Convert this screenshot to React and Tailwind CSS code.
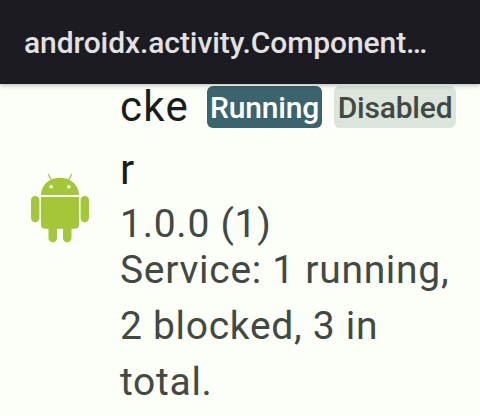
function AndroidIcon() {
  return (
    <svg viewBox="0 0 60 70" className="block h-[70px] w-[60px]" fill="#a4c639">
      <path d="M18.3 1.5 L22 8 M41.7 1.5 L38 8" stroke="#a4c639" strokeWidth="1.3" strokeLinecap="round" />
      <path d="M11 21.9 C11.3 12 19.5 4.8 30 4.8 S48.7 12 49 21.9 Z" />
      <circle cx="21.2" cy="13.7" r="1.8" fill="#fcfef8" />
      <circle cx="38.8" cy="13.7" r="1.8" fill="#fcfef8" />
      <path d="M11 24 H49 V51.5 Q49 55.8 44.7 55.8 H15.3 Q11 55.8 11 51.5 Z" />
      <rect x="1" y="23" width="8.4" height="26.3" rx="4.2" />
      <rect x="50.6" y="23" width="8.4" height="26.3" rx="4.2" />
      <path d="M18.5 52 H27 V65 a4.25 4.25 0 0 1 -8.5 0 Z M33 52 H41.5 V65 a4.25 4.25 0 0 1 -8.5 0 Z" />
    </svg>
  );
}

export default function App() {
  return (
    <div className="flex h-[416px] w-[480px] flex-col overflow-hidden bg-[#fcfef8] font-['Roboto',sans-serif]">
      <header className="z-10 flex h-[84px] shrink-0 items-center bg-[#1b1b21] pl-6 pt-[2px] shadow-[0_1px_5px_rgba(0,0,0,0.3)]">
        <h1 className="whitespace-nowrap text-[30px] font-medium leading-9 tracking-[-0.08px] text-[#e2e2e2]">androidx.activity.Component…</h1>
      </header>
      <main className="-mt-[9px] flex">
        <div className="w-[120px] shrink-0 pl-[30px] pt-[98px]">
          <AndroidIcon />
        </div>
        <div className="w-[350px] shrink-0">
          <div className="flex items-start">
            <h2 className="w-[87px] shrink-0 text-[42px] leading-[63px] tracking-[1.3px] text-[#191c1a]">
              cke
              <br />r
            </h2>
            <div className="flex gap-3 pt-[11px] text-[30px] font-medium leading-[43px]">
              <span className="flex h-[41.5px] w-[115px] justify-center rounded-md bg-[#3b646f] tracking-[-0.2px] text-white">Running</span>
              <span className="flex h-[41.5px] w-[122px] justify-center rounded-md bg-[#dce5db] tracking-[-0.2px] text-[#414942]">Disabled</span>
            </div>
          </div>
          <p className="-mb-[3px] mt-[3px] text-[39px] leading-[41px] tracking-[0.75px] text-[#414942]">1.0.0 (1)</p>
          <p className="whitespace-nowrap text-[39px] leading-[56px] tracking-[0.7px] text-[#414942]">
            Service: 1 running,
            <br />2 blocked, 3 in
            <br />total.
          </p>
        </div>
      </main>
    </div>
  );
}
